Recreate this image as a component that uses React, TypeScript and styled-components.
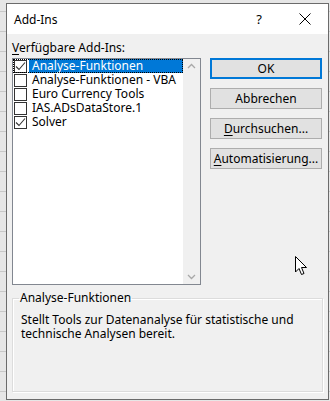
import React from 'react'
import styled, { createGlobalStyle } from 'styled-components'

const GlobalStyle = createGlobalStyle`
  html, body {
    margin: 0;
    padding: 0;
  }
  body {
    width: 330px;
    height: 401px;
    overflow: hidden;
    font-family: 'Noto Sans', 'Open Sans', sans-serif;
    font-size: 12px;
    color: #000;
    background-color: #e6e6e6;
    background-image: repeating-linear-gradient(
      to bottom,
      transparent 0px,
      transparent 11px,
      #c8c8c8 11px,
      #c8c8c8 12px,
      transparent 12px,
      transparent 20px
    );
  }
`

// Excel sheet peeking out behind the dialog
const Desktop = styled.div`
  position: relative;
  width: 330px;
  height: 401px;
  padding: 3px 1px 1px 6px;
  box-sizing: border-box;
`

const Dialog = styled.div`
  width: 323px;
  height: 397px;
  box-sizing: border-box;
  border: 1px solid #6b6b6b;
  background: #f0f0f0;
  display: flex;
  flex-direction: column;
`

const TitleBar = styled.div`
  height: 30px;
  background: #fff;
  display: flex;
  align-items: center;
  padding-left: 7px;
  flex-shrink: 0;
`

const Title = styled.div`
  flex: 1;
  font-size: 12px;
  padding-top: 1px;
`

const Help = styled.div`
  width: 46px;
  text-align: center;
  font-size: 13px;
  padding-right: 0;
  margin-right: 0;
`

const Close = styled.div`
  width: 46px;
  height: 30px;
  display: flex;
  align-items: center;
  justify-content: center;
  margin-right: 0;
`

const Body = styled.div`
  flex: 1;
  padding: 6px 6px 0 5px;
  display: flex;
  flex-direction: column;
`

const Label = styled.div`
  line-height: 16px;
  height: 16px;
`

const Key = styled.span`
  text-decoration: underline;
  text-underline-offset: 2px;
`

const Row = styled.div`
  display: flex;
  margin-top: 2px;
`

const ListBox = styled.div`
  width: 189px;
  height: 227px;
  box-sizing: border-box;
  border: 1px solid #828790;
  background: #fff;
  display: flex;
`

const Items = styled.div`
  flex: 1;
  padding-top: 0;
`

const Item = styled.div<{ $focused?: boolean }>`
  height: 14px;
  display: flex;
  align-items: center;
  padding-left: 1px;
  outline: ${(p) => (p.$focused ? '1px dotted #000' : 'none')};
  outline-offset: -1px;
`

const Box = styled.div`
  width: 13px;
  height: 13px;
  box-sizing: border-box;
  border: 1px solid #333;
  background: #fff;
  display: flex;
  align-items: center;
  justify-content: center;
  flex-shrink: 0;
`

const ItemText = styled.div<{ $selected?: boolean }>`
  flex: 1;
  height: 14px;
  line-height: 14px;
  margin-left: 2px;
  padding-left: 3px;
  white-space: nowrap;
  background: ${(p) => (p.$selected ? '#0078d7' : 'transparent')};
  color: ${(p) => (p.$selected ? '#fff' : '#000')};
`

const ScrollBar = styled.div`
  width: 17px;
  background: #f0f0f0;
  display: flex;
  flex-direction: column;
  justify-content: space-between;
  align-items: center;
  padding: 4px 0 4px;
`

const Buttons = styled.div`
  margin-left: 9px;
  display: flex;
  flex-direction: column;
  gap: 9px;
`

const Button = styled.div<{ $default?: boolean }>`
  width: 112px;
  height: 21px;
  box-sizing: border-box;
  background: #e1e1e1;
  border: ${(p) => (p.$default ? '2px solid #0078d7' : '1px solid #adadad')};
  display: flex;
  align-items: center;
  justify-content: center;
  line-height: 14px;
`

const Group = styled.fieldset`
  margin: 6px 0 0 0;
  width: 311px;
  height: 101px;
  box-sizing: border-box;
  border: 1px solid #dcdcdc;
  box-shadow: inset 1px 1px 0 #fff, 1px 1px 0 #fff;
  padding: 3px 8px 0 8px;
`

const Legend = styled.legend`
  padding: 0 1px;
  margin-left: -2px;
  line-height: 14px;
`

const Description = styled.div`
  line-height: 14px;
  margin-top: 5px;
`

const Pointer = styled.svg`
  position: absolute;
  left: 295px;
  top: 256px;
`

const Check = () => (
  <svg width="11" height="11" viewBox="0 0 11 11">
    <polyline points="1,5.5 4,8.5 10,1.5" fill="none" stroke="#333" strokeWidth="1.1" />
  </svg>
)

const Chevron = ({ up }: { up?: boolean }) => (
  <svg width="9" height="6" viewBox="0 0 9 6">
    <polyline
      points={up ? '1,5 4.5,1.5 8,5' : '1,1 4.5,4.5 8,1'}
      fill="none"
      stroke="#a8a8a8"
      strokeWidth="1.3"
    />
  </svg>
)

const items = [
  { name: 'Analyse-Funktionen', checked: true, selected: true },
  { name: 'Analyse-Funktionen - VBA', checked: false },
  { name: 'Euro Currency Tools', checked: false },
  { name: 'IAS.ADsDataStore.1', checked: false },
  { name: 'Solver', checked: true },
]

const App: React.FC = () => (
  <>
    <GlobalStyle />
    <Desktop>
      <Dialog>
        <TitleBar>
          <Title>Add-Ins</Title>
          <Help>?</Help>
          <Close>
            <svg width="12" height="12" viewBox="0 0 12 12">
              <path d="M0.5 0.5 L11.5 11.5 M11.5 0.5 L0.5 11.5" stroke="#000" strokeWidth="1" />
            </svg>
          </Close>
        </TitleBar>
        <Body>
          <Label>
            <Key>V</Key>erfügbare Add-Ins:
          </Label>
          <Row>
            <ListBox>
              <Items>
                {items.map((it) => (
                  <Item key={it.name} $focused={it.selected}>
                    <Box>{it.checked && <Check />}</Box>
                    <ItemText $selected={it.selected}>{it.name}</ItemText>
                  </Item>
                ))}
              </Items>
              <ScrollBar>
                <Chevron up />
                <Chevron />
              </ScrollBar>
            </ListBox>
            <Buttons>
              <Button $default>OK</Button>
              <Button>Abbrechen</Button>
              <Button>
                <span>
                  <Key>D</Key>urchsuchen...
                </span>
              </Button>
              <Button>
                <span>
                  <Key>A</Key>utomatisierung...
                </span>
              </Button>
            </Buttons>
          </Row>
          <Group>
            <Legend>Analyse-Funktionen</Legend>
            <Description>
              Stellt Tools zur Datenanalyse für statistische und
              <br />
              technische Analysen bereit.
            </Description>
          </Group>
        </Body>
      </Dialog>
      <Pointer width="13" height="20" viewBox="0 0 13 20">
        <path d="M0.5 0.5 L0.5 16 L4 12.5 L6.5 18.5 L9 17.5 L6.5 11.5 L11.5 11.5 Z" fill="#fff" stroke="#000" strokeWidth="1" />
      </Pointer>
    </Desktop>
  </>
)

export default App
